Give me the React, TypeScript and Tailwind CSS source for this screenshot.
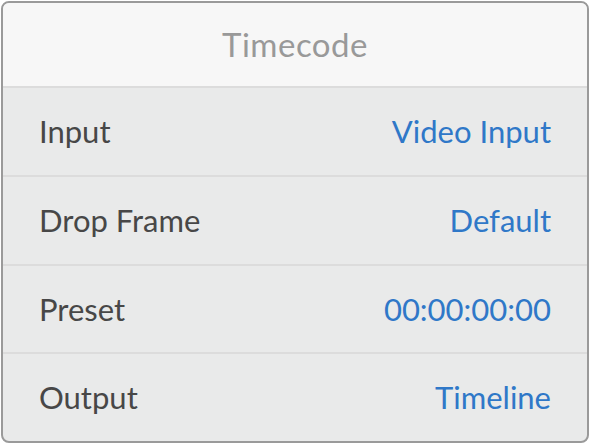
const rows = [
  { label: "Input", value: "Video Input" },
  { label: "Drop Frame", value: "Default" },
  { label: "Preset", value: "00:00:00:00" },
  { label: "Output", value: "Timeline" },
];

export default function App() {
  return (
    <div className="w-[590px] h-[444px] bg-white p-px font-['Lato',sans-serif]">
      <div className="h-full flex flex-col border-2 border-[#9a9a9a] rounded-[8px] overflow-hidden bg-[#e9eaea]">
        <div className="h-[85px] shrink-0 bg-[#f7f7f7] border-b-2 border-[#dcdcdc] flex items-center justify-center">
          <span className="text-[33px] text-[#999999] tracking-[0.5px]">Timecode</span>
        </div>
        {rows.map((r, i) => (
          <div
            key={i}
            className={`flex-1 flex items-center justify-between pl-[36px] pr-[36px] ${
              i < rows.length - 1 ? "border-b-2 border-[#dcdcdc]" : ""
            }`}
          >
            <span className="text-[31px] text-[#474747]">{r.label}</span>
            <span className="text-[31px] text-[#2f78c8]">{r.value}</span>
          </div>
        ))}
      </div>
    </div>
  );
}
